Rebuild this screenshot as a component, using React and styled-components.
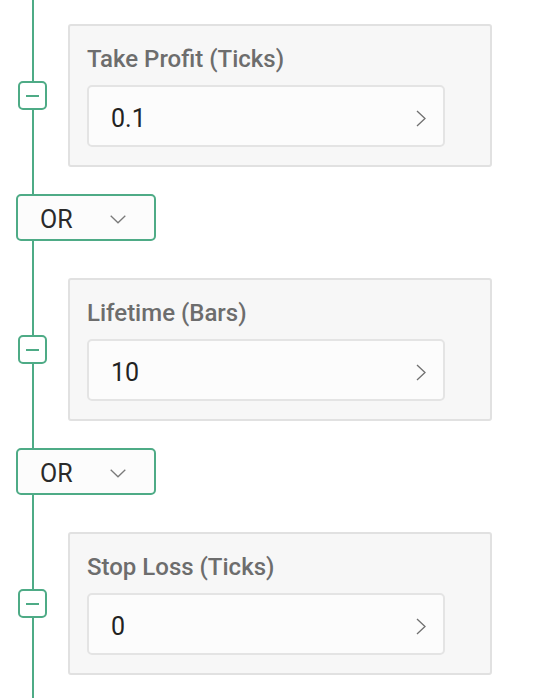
import styled, { createGlobalStyle } from "styled-components"

const GlobalStyle = createGlobalStyle`
    html, body {
        margin: 0;
        padding: 0;
        background: #ffffff;
        font-family: Roboto, "Liberation Sans", sans-serif;
    }
`

const Timeline = styled.div`
    position: relative;
    width: 542px;
    height: 698px;
    overflow: hidden;
    padding-top: 24px;
    box-sizing: border-box;
    display: flex;
    flex-direction: column;

    &::before {
        content: "";
        position: absolute;
        left: 32px;
        top: 0;
        bottom: 0;
        width: 2px;
        background: #4eab86;
    }
`

const RuleRow = styled.div`
    display: flex;
    align-items: center;
    position: relative;
`

const Gutter = styled.div`
    width: 68px;
    flex-shrink: 0;
    display: flex;
    align-items: center;
    padding-left: 18px;
    box-sizing: border-box;
`

const RemoveButton = styled.button`
    width: 29px;
    height: 29px;
    padding: 0;
    border: 2px solid #4eab86;
    border-radius: 5px;
    background: #ffffff;
    display: flex;
    align-items: center;
    justify-content: center;
    position: relative;
    cursor: pointer;

    &::after {
        content: "";
        width: 13px;
        height: 2px;
        background: #4eab86;
    }
`

const Card = styled.div`
    width: 424px;
    height: 143px;
    box-sizing: border-box;
    border: 2px solid #e1e1e1;
    border-radius: 3px;
    background: #f7f7f7;
    padding: 19px 45px 0 17px;
    display: flex;
    flex-direction: column;
    gap: 11px;
`

const Label = styled.div`
    font-size: 24px;
    font-weight: 500;
    color: #6d6d6d;
    line-height: 29px;
`

const ValueField = styled.div`
    height: 62px;
    box-sizing: border-box;
    border: 2px solid #e4e4e4;
    border-radius: 5px;
    background: #fcfcfc;
    display: flex;
    align-items: center;
    justify-content: space-between;
    padding: 4px 17px 0 22px;
`

const Value = styled.span`
    font-size: 25px;
    color: #222222;
`

const Connector = styled.div`
    position: relative;
    margin: ${(p) => p.$top}px 0 ${(p) => p.$bottom}px 16px;
    width: 140px;
    height: 47px;
    box-sizing: border-box;
    border: 2px solid #4eab86;
    border-radius: 5px;
    background: #fcfcfc;
    display: flex;
    align-items: center;
    padding: 3px 28px 0 22px;
    justify-content: space-between;
`

const ConnectorText = styled.span`
    font-size: 25px;
    color: #2a2a2a;
`

function ChevronRight() {
    return (
        <svg width="10" height="17" viewBox="0 0 10 17" fill="none">
            <path d="M1 1 L9 8.5 L1 16" stroke="#707070" strokeWidth="1.3" />
        </svg>
    )
}

function ChevronDown() {
    return (
        <svg width="16" height="9" viewBox="0 0 16 9" fill="none">
            <path d="M0.7 0.7 L8 7.8 L15.3 0.7" stroke="#7a7a7a" strokeWidth="1.3" />
        </svg>
    )
}

function Rule({ label, value }) {
    return (
        <RuleRow>
            <Gutter>
                <RemoveButton aria-label="remove" />
            </Gutter>
            <Card>
                <Label>{label}</Label>
                <ValueField>
                    <Value>{value}</Value>
                    <ChevronRight />
                </ValueField>
            </Card>
        </RuleRow>
    )
}

function OrSelect() {
    return (
        <Connector $top={27} $bottom={37}>
            <ConnectorText>OR</ConnectorText>
            <ChevronDown />
        </Connector>
    )
}

export default function App() {
    return (
        <>
            <GlobalStyle />
            <Timeline>
                <Rule label="Take Profit (Ticks)" value="0.1" />
                <OrSelect />
                <Rule label="Lifetime (Bars)" value="10" />
                <OrSelect />
                <Rule label="Stop Loss (Ticks)" value="0" />
            </Timeline>
        </>
    )
}
